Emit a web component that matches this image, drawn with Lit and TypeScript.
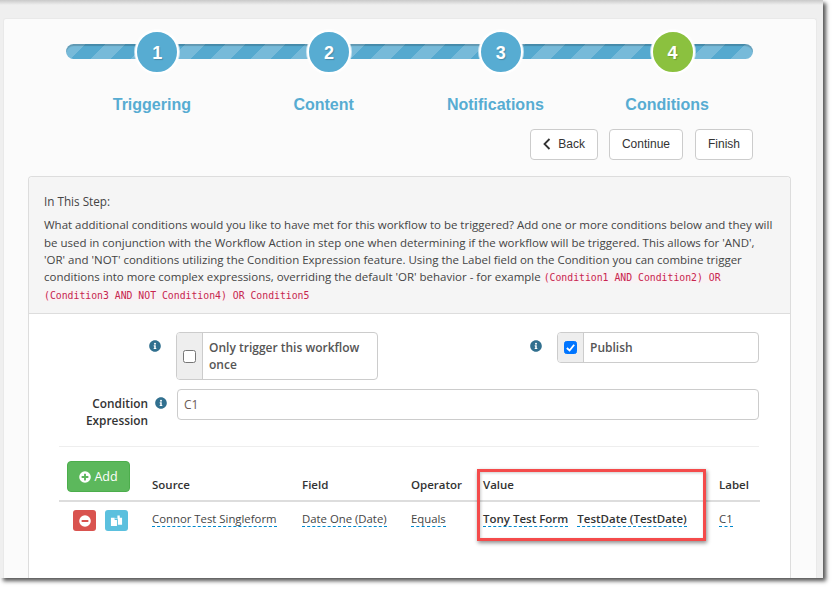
import { LitElement, html, css } from "lit";
import { customElement } from "lit/decorators.js";

const info = html`<svg class="info" viewBox="0 0 512 512"><path fill="#31708f" d="M256 8C119 8 8 119 8 256s111 248 248 248 248-111 248-248S393 8 256 8zm0 110a42 42 0 1 1 0 84 42 42 0 0 1 0-84zm56 254c0 7-5 12-12 12h-88c-7 0-12-5-12-12v-24c0-7 5-12 12-12h12v-64h-12c-7 0-12-5-12-12v-24c0-7 5-12 12-12h64c7 0 12 5 12 12v100h12c7 0 12 5 12 12v24z"/></svg>`;

const steps = [
  { n: 1, label: "Triggering" },
  { n: 2, label: "Content" },
  { n: 3, label: "Notifications" },
  { n: 4, label: "Conditions", current: true },
];

@customElement("app-root")
export class AppRoot extends LitElement {
  static styles = css`
    :host { display: block; width: 838px; height: 593px; background: #fff; overflow: hidden; font-family: "Open Sans", sans-serif; }
    * { box-sizing: border-box; }
    .frame { width: 823px; height: 578px; background: #efefef; padding: 18px 6px 0 3px; box-shadow: 3px 3px 4px #555; position: relative; }
    .frame::before { content: ""; position: absolute; left: 0; right: 0; top: 0; height: 5px; background: linear-gradient(#c9c9c9, #efefef); }
    .panel { height: 560px; background: #fbfbfb; border: 1px solid #e9e9e9; border-bottom: 0; border-radius: 3px 3px 0 0; padding: 0 25px 0 24px; display: flex; flex-direction: column; }
    .wizard { margin: 25px 38px 0 38px; position: relative; height: 84px; }
    .bar { position: absolute; left: 0; right: 0; top: 0; height: 15px; border-radius: 8px; box-shadow: inset 0 2px 1px rgba(0,0,0,.18); background-color: #55a9cf;
      background-image: linear-gradient(135deg, rgba(255,255,255,.2) 25%, transparent 25%, transparent 50%, rgba(255,255,255,.2) 50%, rgba(255,255,255,.2) 75%, transparent 75%, transparent); background-size: 40px 40px; }
    .steps { position: relative; display: grid; grid-template-columns: repeat(4, 1fr); margin-top: -14px; }
    .step { display: flex; flex-direction: column; align-items: center; }
    .num { width: 44px; height: 44px; margin-left: 11px; border-radius: 50%; border: 2px solid #fff; background: #57acd2; box-shadow: 0 0 0 1px rgba(255,255,255,.6); color: #fff; font: bold 18px/42px "Liberation Sans", sans-serif; text-align: center; text-shadow: 1px 1px 1px rgba(0,0,0,.2); }
    .num.current { background: #8bc13f; }
    .label { margin-top: 21px; margin-left: 0; color: #57acd2; font: bold 16px/20px "Liberation Sans", sans-serif; }
    .actions { display: flex; justify-content: flex-end; gap: 11px; margin: 1px 38px 16px 0; }
    .btn { height: 31px; padding: 0 12px; border: 1px solid #ccc; border-radius: 4px; background: #fff; color: #333; font: 12px/29px "Liberation Sans", sans-serif; display: flex; align-items: center; gap: 7px; }
    .btn:last-child { margin-left: 1px; }
    .chev { width: 8px; height: 12px; margin-bottom: 2px; }
    .card { flex: 1; background: #fff; border: 1px solid #ddd; border-bottom: 0; border-radius: 4px 4px 0 0; }
    .head { height: 137px; background: #f5f5f5; border-bottom: 1px solid #ddd; padding: 16px 15px 0; color: #444; font-size: 11.49px; line-height: 17.25px; border-radius: 4px 4px 0 0; }
    .head h4 { margin: 0 0 6px; font-size: 11.7px; font-weight: 500; line-height: 17.25px; }
    .head p { margin: 0; }
    code { font-family: "DejaVu Sans Mono", monospace; font-size: 9.8px; color: #c7254e; background: #f9f2f4; padding: 0; }
    .body { padding: 18px 31px 0 30px; }
    .row { display: grid; grid-template-columns: 117px 1fr 179px 202px; align-items: start; }
    .ico { display: flex; justify-content: flex-end; padding: 8px 15px 0 0; }
    .info { width: 12px; height: 12px; display: block; }
    .group { display: flex; border: 1px solid #ccc; border-radius: 4px; background: #fff; overflow: hidden; }
    .addon { width: 26px; background: #eee; border-right: 1px solid #ccc; display: flex; align-items: center; justify-content: center; flex: none; }
    .cb { width: 13px; height: 13px; border: 1px solid #767676; border-radius: 2.5px; background: #fff; }
    .cb.on { background: #0075ff; border-color: #0075ff; display: flex; align-items: center; justify-content: center; }
    .cb svg { width: 11px; height: 11px; }
    .gtext { padding: 6px 6px; color: #555; font-size: 12px; line-height: 17px; font-weight: 600; }
    .once { width: 202px; min-height: 48px; }
    .pub { width: 202px; min-height: 30px; }
    .exp { display: grid; grid-template-columns: 118px 1fr; margin-top: 9px; }
    .exp label { display: flex; justify-content: flex-end; gap: 7px; padding: 6px 10px 0 0; color: #333; font-size: 11.85px; line-height: 17px; font-weight: 600; text-align: right; }
    .exp .info { margin-top: 2px; flex: none; }
    .input { height: 31px; border: 1px solid #ccc; border-radius: 4px; background: #fff; color: #6b5a55; font-size: 12px; line-height: 29px; padding: 0 6px; }
    .sep { height: 1px; background: #eee; margin-top: 17px; }
    .table { position: relative; display: grid; grid-template-columns: 93px 150px 109px 72px 236px 1fr; margin-top: 14px; margin-right: -1px; }
    .table > .th { display: flex; align-items: flex-end; height: 41px; padding-bottom: 7px; border-bottom: 2px solid #ddd; color: #333; font-size: 11.5px; line-height: 17px; font-weight: 600; }
    .add { width: 63px; height: 31px; margin: 0 0 0 8px; border-radius: 4px; background: #5cb85c; border: 1px solid #4cae4c; color: #fff; font-size: 12.5px; font-weight: 400; display: flex; align-items: center; justify-content: center; gap: 3px; align-self: flex-start; }
    .add svg { width: 12px; height: 12px; }
    .td { padding-top: 9px; font-size: 11.35px; line-height: 15px; color: #444; }
    .td.acts { display: flex; gap: 9px; padding: 8px 0 0 14px; }
    .sq { width: 23px; height: 21px; border-radius: 3px; display: flex; align-items: center; justify-content: center; }
    .sq.red { background: #d9534f; }
    .sq.blue { background: #5bc0de; }
    .sq svg { width: 12px; height: 12px; }
    .sq.blue svg { width: 13px; height: 13px; }
    .ed { display: inline-block; border-bottom: 1px dashed #0088cc; }
    .strong { font-weight: 600; color: #333; font-size: 11.5px; }
    .value { display: flex; gap: 9px; align-items: flex-start; }
    .hl { position: absolute; left: 418px; top: 8px; width: 229px; height: 72px; border: 3px solid #f44b4b; box-shadow: 1px 2px 4px rgba(0,0,0,.45), inset 1px 1px 3px rgba(0,0,0,.2); pointer-events: none; }
  `;

  render() {
    return html`<div class="frame"><div class="panel">
      <div class="wizard">
        <div class="bar"></div>
        <div class="steps">
          ${steps.map((s) => html`<div class="step"><div class="num ${s.current ? "current" : ""}">${s.n}</div><div class="label">${s.label}</div></div>`)}
        </div>
      </div>
      <div class="actions">
        <div class="btn"><svg class="chev" viewBox="0 0 8 12"><path d="M6.5 1 1.500 6l5 5" fill="none" stroke="#333" stroke-width="1.8"/></svg>Back</div>
        <div class="btn">Continue</div>
        <div class="btn">Finish</div>
      </div>
      <div class="card">
        <div class="head">
          <h4>In This Step:</h4>
          <p>What additional conditions would you like to have met for this workflow to be triggered? Add one or more conditions below and they will be used in conjunction with the Workflow Action in step one when determining if the workflow will be triggered. This allows for 'AND', 'OR' and 'NOT' conditions utilizing the Condition Expression feature. Using the Label field on the Condition you can combine trigger conditions into more complex expressions, overriding the default 'OR' behavior - for example <code>(Condition1 AND Condition2) OR</code> <code>(Condition3 AND NOT Condition4) OR Condition5</code></p>
        </div>
        <div class="body">
          <div class="row">
            <div class="ico">${info}</div>
            <div class="group once"><div class="addon"><div class="cb"></div></div><div class="gtext">Only trigger this workflow once</div></div>
            <div class="ico">${info}</div>
            <div class="group pub"><div class="addon"><div class="cb on"><svg viewBox="0 0 12 12"><path d="M2 6.500 5 9.300 10 3" fill="none" stroke="#fff" stroke-width="2"/></svg></div></div><div class="gtext">Publish</div></div>
          </div>
          <div class="exp">
            <label><span>Condition<br />Expression</span>${info}</label>
            <div class="input">C1</div>
          </div>
          <div class="sep"></div>
          <div class="table">
            <div class="th"><div class="add"><svg viewBox="0 0 512 512"><path fill="#fff" d="M256 8a248 248 0 1 0 0 496 248 248 0 0 0 0-496zm144 276c0 7-5 12-12 12h-92v92c0 7-5 12-12 12h-56c-7 0-12-5-12-12v-92h-92c-7 0-12-5-12-12v-56c0-7 5-12 12-12h92v-92c0-7 5-12 12-12h56c7 0 12 5 12 12v92h92c7 0 12 5 12 12v56z"/></svg>Add</div></div>
            <div class="th">Source</div>
            <div class="th">Field</div>
            <div class="th">Operator</div>
            <div class="th">Value</div>
            <div class="th">Label</div>
            <div class="td acts">
              <div class="sq red"><svg viewBox="0 0 512 512"><path fill="#fff" d="M256 8a248 248 0 1 0 0 496 248 248 0 0 0 0-496zM124 296c-7 0-12-5-12-12v-56c0-7 5-12 12-12h264c7 0 12 5 12 12v56c0 7-5 12-12 12H124z"/></svg></div>
              <div class="sq blue"><svg viewBox="0 0 14 14"><path fill="#fff" d="M1 4h4v2.500h2.500V13H1zM6 4l1.500 1.500H6zM8 1.500h2.500V4H13v7.500H8.500V5.700L8 5z"/></svg></div>
            </div>
            <div class="td"><span class="ed">Connor Test Singleform</span></div>
            <div class="td"><span class="ed">Date One (Date)</span></div>
            <div class="td"><span class="ed">Equals</span></div>
            <div class="td value strong"><span class="ed">Tony Test Form</span><span class="ed">TestDate (TestDate)</span></div>
            <div class="td"><span class="ed">C1</span></div>
            <div class="hl"></div>
          </div>
        </div>
      </div>
    </div></div>`;
  }
}
